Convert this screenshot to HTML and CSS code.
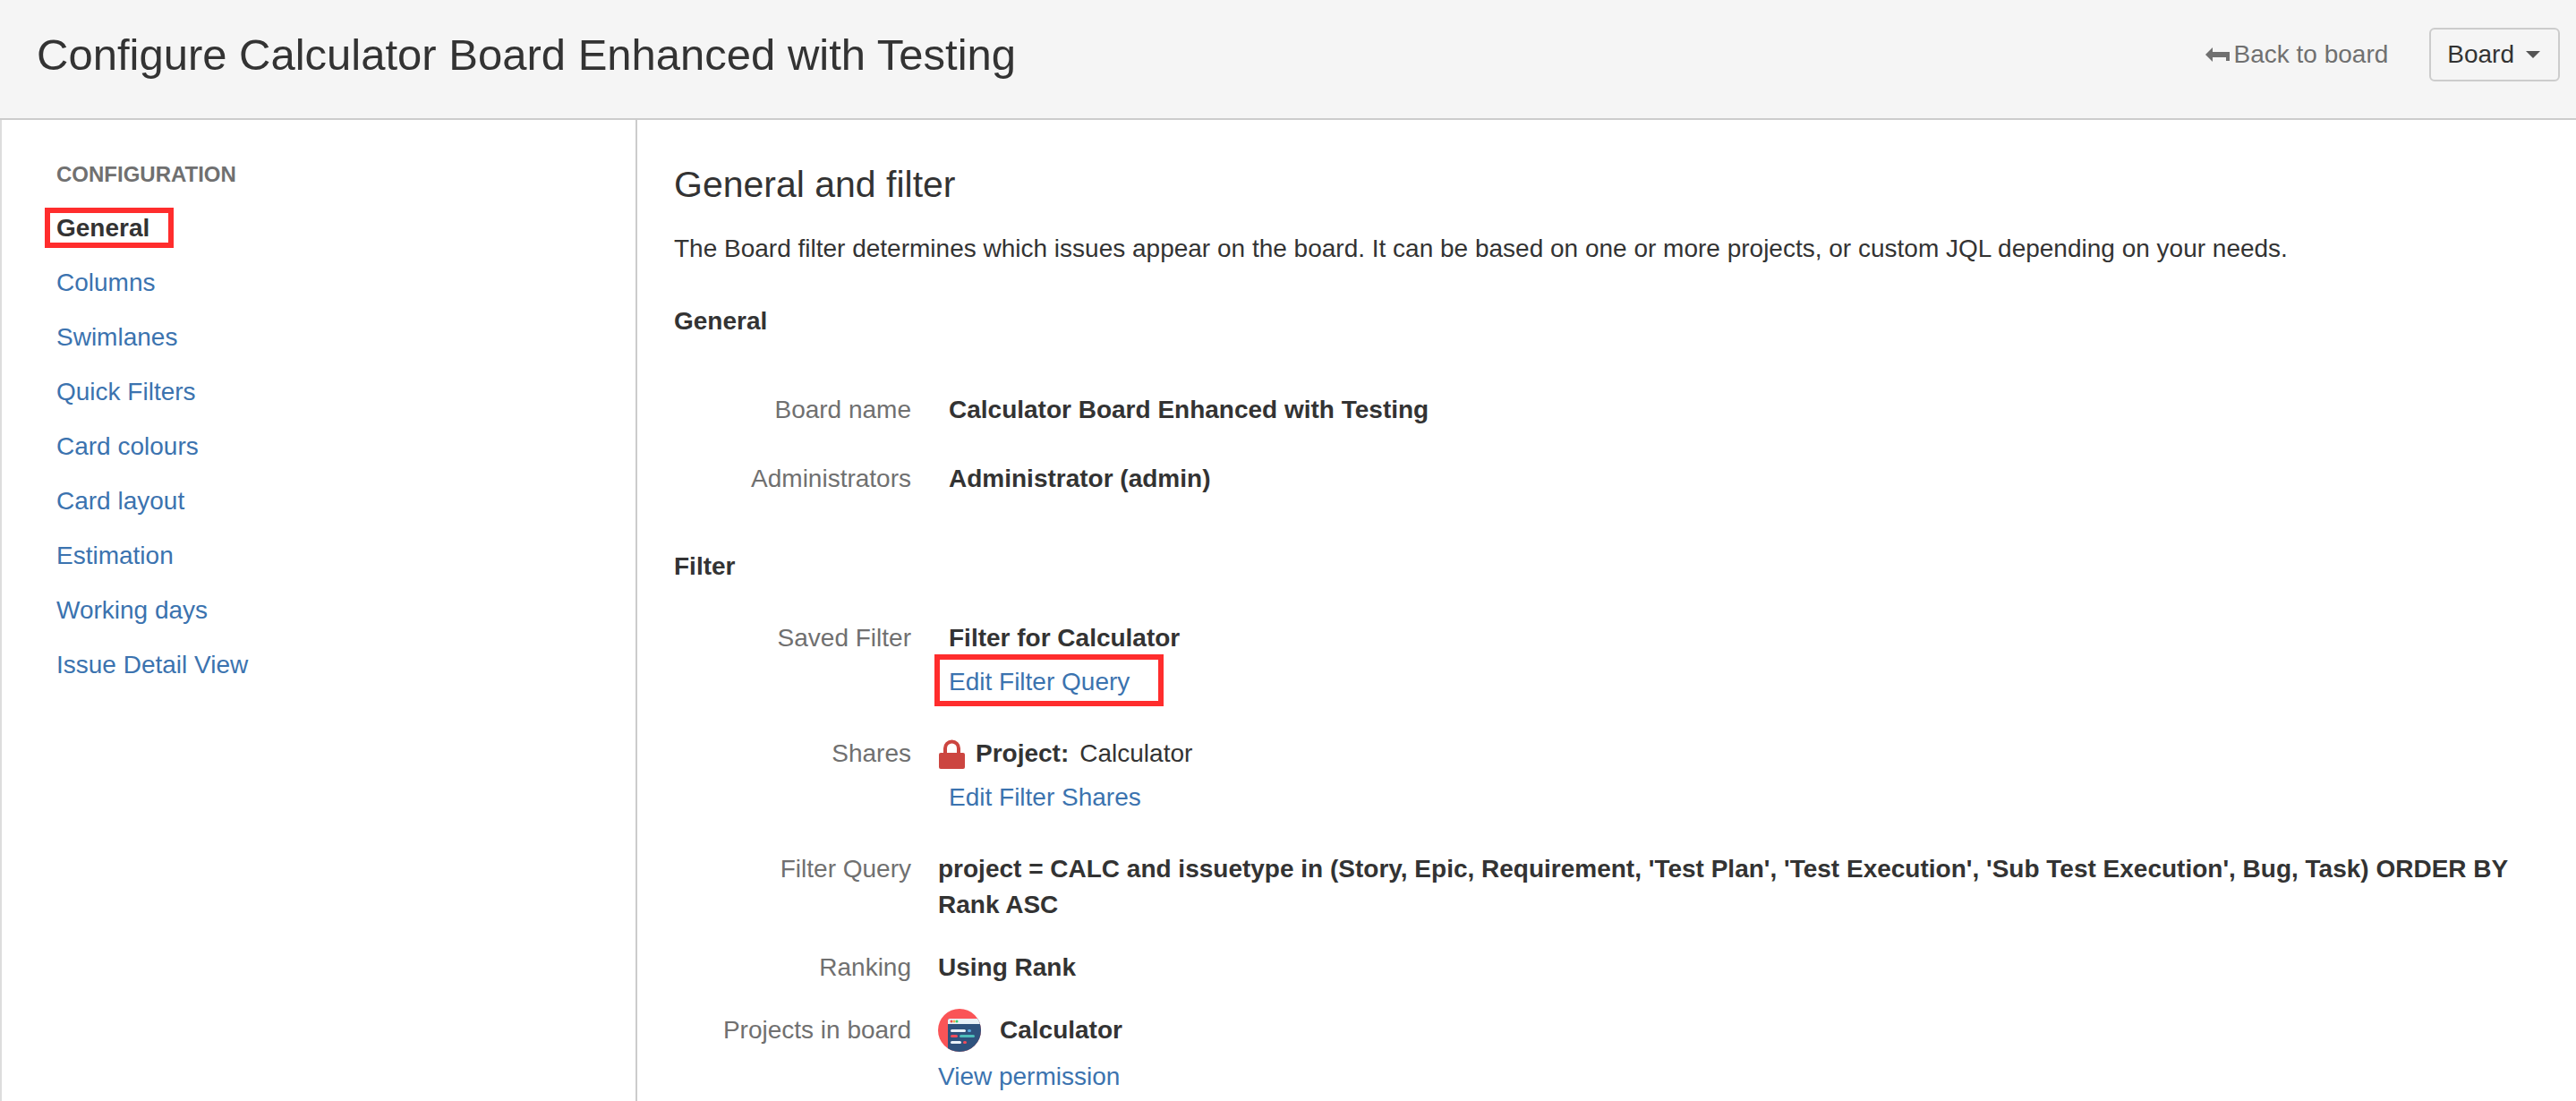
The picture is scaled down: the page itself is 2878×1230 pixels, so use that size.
FILE: index.html
```html
<!DOCTYPE html>
<html lang="en">
<head>
  <meta charset="UTF-8" />
  <meta name="viewport" content="width=device-width, initial-scale=1.0"/>
  <title>Configure Calculator Board Enhanced with Testing</title>
  <link rel="stylesheet" href="styles.css">
</head>
<body>
  <header class="page-header">
    <h1>Configure Calculator Board Enhanced with Testing</h1>
    <a class="back-link" href="#">
      <svg class="back-icon" width="27" height="16" viewBox="0 0 27 16" aria-hidden="true">
        <path d="M0 8L8 0V5H27V15H23V11H8V16Z" fill="currentColor"/>
      </svg>
      Back to board
    </a>
    <button class="board-button" type="button">
      Board
      <svg width="16" height="8" viewBox="0 0 16 8" aria-hidden="true">
        <path d="M0 0H16L8 8Z" fill="#555"/>
      </svg>
    </button>
  </header>

  <div class="page-body">
    <nav class="sidebar">
      <h2>CONFIGURATION</h2>
      <ul>
        <li><a class="current marked" href="#">General</a></li>
        <li><a href="#">Columns</a></li>
        <li><a href="#">Swimlanes</a></li>
        <li><a href="#">Quick Filters</a></li>
        <li><a href="#">Card colours</a></li>
        <li><a href="#">Card layout</a></li>
        <li><a href="#">Estimation</a></li>
        <li><a href="#">Working days</a></li>
        <li><a href="#">Issue Detail View</a></li>
      </ul>
    </nav>

    <main class="content">
      <h2>General and filter</h2>
      <p>The Board filter determines which issues appear on the board. It can be based on one or more projects, or custom JQL depending on your needs.</p>

      <h3>General</h3>
      <dl class="general-fields">
        <dt>Board name</dt>
        <dd class="editable"><strong>Calculator Board Enhanced with Testing</strong></dd>
        <dt>Administrators</dt>
        <dd class="editable"><strong>Administrator (admin)</strong></dd>
      </dl>

      <h3>Filter</h3>
      <dl class="filter-fields">
        <dt>Saved Filter</dt>
        <dd class="with-link">
          <strong class="inset">Filter for Calculator</strong>
          <a class="inset-link marked marked-wide" href="#">Edit Filter Query</a>
        </dd>
        <dt>Shares</dt>
        <dd class="with-link">
          <span class="share">
            <svg class="lock" width="30" height="34" viewBox="0 0 30 34" aria-hidden="true">
              <path d="M8 17V11A7 7 0 0 1 23 11V17" fill="none" stroke="#cc4540" stroke-width="4"/>
              <rect x="1" y="16" width="29" height="18" rx="2" fill="#cc4540"/>
            </svg>
            <strong>Project:</strong>
            <span>Calculator</span>
          </span>
          <a class="inset-link" href="#">Edit Filter Shares</a>
        </dd>
        <dt>Filter Query</dt>
        <dd><strong>project = CALC and issuetype in (Story, Epic, Requirement, 'Test Plan', 'Test Execution', 'Sub Test Execution', Bug, Task) ORDER BY Rank ASC</strong></dd>
        <dt>Ranking</dt>
        <dd><strong>Using Rank</strong></dd>
        <dt>Projects in board</dt>
        <dd class="project">
          <span class="project-name">
            <svg width="48" height="48" viewBox="0 0 48 48" aria-hidden="true">
              <defs>
                <clipPath id="avatar"><circle cx="24" cy="24" r="24"/></clipPath>
              </defs>
              <g clip-path="url(#avatar)">
                <rect width="48" height="48" fill="#fa5457"/>
                <path d="M11 48V13Q11 11 13 11H48V48Z" fill="#2f527d"/>
                <path d="M11 17V13Q11 11 13 11H48V17Z" fill="#e9f1f8"/>
                <circle cx="15" cy="14" r="1.5" fill="#ef4d53"/>
                <circle cx="18" cy="14" r="1.5" fill="#f5b14d"/>
                <circle cx="21" cy="14" r="1.5" fill="#35cf74"/>
                <rect x="14" y="23" width="17" height="3" rx="1.5" fill="#e9f1f8"/>
                <rect x="33" y="23" width="4" height="3" rx="1.5" fill="#5aa9de"/>
                <rect x="14" y="29" width="8" height="3" rx="1.5" fill="#ef4d5b"/>
                <rect x="24" y="29" width="17" height="3" rx="1.5" fill="#4dbdbb"/>
                <rect x="14" y="36" width="12" height="3" rx="1.5" fill="#e9f1f8"/>
                <rect x="28" y="36" width="4" height="3" rx="1.5" fill="#ef4d5b"/>
              </g>
            </svg>
            <strong>Calculator</strong>
          </span>
          <a href="#">View permission</a>
        </dd>
      </dl>
    </main>
  </div>
</body>
</html>
```

FILE: styles.css
```css
* {
  margin: 0;
  padding: 0;
  box-sizing: border-box;
}

body {
  display: flex;
  flex-direction: column;
  min-height: 100vh;
  font-family: "Liberation Sans", Arial, sans-serif;
  font-size: 28px;
  line-height: 40px;
  color: #333;
  background: #fff;
}

a {
  color: #3b73af;
  text-decoration: none;
}

a:hover {
  text-decoration: underline;
}

.page-header {
  display: flex;
  align-items: center;
  padding: 31px 18px 41px 41px;
  background: #f5f5f5;
  border-bottom: 2px solid #ccc;
}

.page-header h1 {
  font-size: 49px;
  font-weight: normal;
  line-height: 60px;
}

.back-link {
  display: flex;
  align-items: center;
  gap: 5px;
  margin-left: auto;
  margin-right: 46px;
  color: #707070;
}

.board-button {
  display: flex;
  align-items: center;
  gap: 13px;
  height: 60px;
  padding: 0 20px 0 18px;
  font: inherit;
  color: #333;
  background: #f5f5f5;
  border: 2px solid #ccc;
  border-radius: 6px;
  cursor: pointer;
}

.page-body {
  display: flex;
  flex: 1;
  border-left: 2px solid #ddd;
}

.sidebar {
  flex: 0 0 710px;
  padding: 41px 61px;
  border-right: 2px solid #ccc;
}

.sidebar h2 {
  font-size: 24px;
  line-height: 40px;
  color: #707070;
}

.sidebar ul {
  display: flex;
  flex-direction: column;
  gap: 21px;
  margin-top: 20px;
  list-style: none;
}

.sidebar a {
  display: inline-block;
}

.sidebar li {
  height: 40px;
}

.sidebar .current {
  font-weight: bold;
  color: #333;
}

/* red highlight frame drawn over the item */
.marked {
  position: relative;
}

.marked::after {
  content: "";
  position: absolute;
  inset: -3px -27px -2px -13px;
  border: 6px solid #ff2d2d;
}

.marked-wide::after {
  inset: -11px -38px -7px -16px;
}

.content {
  flex: 1;
  min-width: 0;
  padding: 48px 40px 7px 41px;
}

.content h2 {
  font-size: 41px;
  font-weight: normal;
  line-height: 48px;
}

.content p {
  margin-top: 28px;
}

.content h3 {
  margin-top: 41px;
  font-size: 28px;
}

dl {
  display: grid;
  grid-template-columns: 265px 1fr;
  column-gap: 30px;
}

dt {
  color: #707070;
  text-align: right;
}

.general-fields {
  row-gap: 37px;
  margin-top: 59px;
  margin-bottom: 58px;
}

.editable {
  padding-left: 12px;
}

.filter-fields {
  row-gap: 30px;
  margin-top: 40px;
}

.with-link {
  display: flex;
  flex-direction: column;
  align-items: flex-start;
  gap: 9px;
  padding-bottom: 10px;
}

.inset,
.inset-link {
  margin-left: 12px;
}

.share {
  display: flex;
  align-items: center;
  gap: 12px;
}

.project {
  display: flex;
  flex-direction: column;
  align-items: flex-start;
  gap: 8px;
  margin-top: -4px;
}

.project-name {
  display: flex;
  align-items: center;
  gap: 21px;
}

.project-name svg,
.share svg {
  display: block;
}
```
